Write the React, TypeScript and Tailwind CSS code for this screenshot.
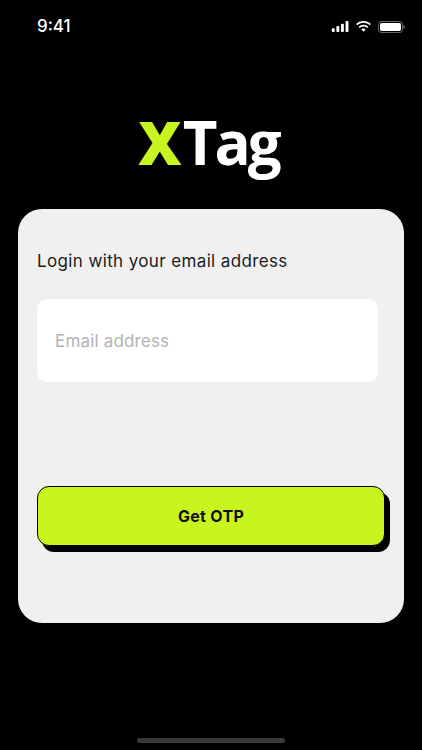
function StatusBar() {
  return (
    <div className="flex items-center justify-between h-[52px] pl-[37px] pr-[17px] pt-[1px] text-white">
      <span className="text-[17px] font-medium font-['Inter',sans-serif]">9:41</span>
      <div className="flex items-center gap-[5px]">
        <svg width="19" height="11" viewBox="0 0 19 12" fill="white">
          <rect x="0" y="8" width="3.2" height="4" rx="1" />
          <rect x="5" y="5.5" width="3.2" height="6.5" rx="1" />
          <rect x="10" y="3" width="3.2" height="9" rx="1" />
          <rect x="15" y="0" width="3.2" height="12" rx="1" />
        </svg>
        <svg width="17" height="13" viewBox="0 0 17 12" fill="white">
          <path d="M8.5 2.300c2.400 0 4.600.9 6.200 2.500l1.200-1.200C14 1.600 11.400.6 8.500.6S3 1.600 1.100 3.600l1.200 1.200C3.900 3.200 6.100 2.300 8.500 2.300z" />
          <path d="M8.500 6c1.400 0 2.700.5 3.700 1.500l1.200-1.200C12.100 5 10.400 4.300 8.500 4.300S4.900 5 3.600 6.300l1.200 1.200C5.800 6.500 7.100 6 8.500 6z" />
          <path d="M8.500 7.900c-.9 0-1.700.3-2.300.9l2.300 2.500 2.300-2.500c-.6-.6-1.400-.9-2.300-.9z" />
        </svg>
        <svg width="27" height="12" viewBox="0 0 27 12" fill="white" className="ml-[1px]">
          <rect x="0.500" y="0.500" width="24" height="11" rx="3" fill="none" stroke="white" strokeOpacity="0.4" />
          <rect x="2" y="2" width="21" height="8" rx="1.800" />
          <path d="M25.500 4v4c.8-.3 1.300-1.100 1.300-2S26.300 4.300 25.500 4z" fillOpacity="0.5" />
        </svg>
      </div>
    </div>
  );
}

export default function App() {
  return (
    <div className="w-[422px] h-[750px] bg-black flex flex-col overflow-hidden relative">
      <StatusBar />
      <div className="h-[157px] flex items-start justify-center pt-[49px] pr-[5px]">
        <div className="flex items-baseline h-[82px] text-[60px] leading-[82px] font-['Open_Sans',sans-serif]">
          <span className="font-extrabold text-[#c8f51f] mr-[1px]">X</span>
          <span className="font-bold text-white tracking-[-3px]">Tag</span>
        </div>
      </div>
      <div className="mx-[18px] w-[386px] h-[414px] bg-[#f0f0f0] rounded-[24px] pt-[40px] px-[19px]">
        <p className="text-[17px] leading-[24px] text-[#1c1c1c] font-['Inter',sans-serif] tracking-[0.370px]">Login with your email address</p>
        <div className="mt-[26px] w-[341px] h-[83px] bg-white rounded-[10px] flex items-center px-[18px] pt-[2px]">
          <span className="text-[17px] text-[#b3b3b3] font-['Inter',sans-serif] tracking-[0.170px]">Email address</span>
        </div>
        <div className="mt-[104px] w-[348px] h-[60px] bg-[#c8f51f] border border-black rounded-[12px] shadow-[5px_6px_0_0_#000] flex items-center justify-center">
          <span className="text-[16px] font-bold text-[#111] font-['Inter',sans-serif] tracking-[0.300px]">Get OTP</span>
        </div>
      </div>
      <div className="absolute left-[137px] bottom-[7px] w-[148px] h-[5px] rounded-full bg-[#3a3a3a]" />
    </div>
  );
}
